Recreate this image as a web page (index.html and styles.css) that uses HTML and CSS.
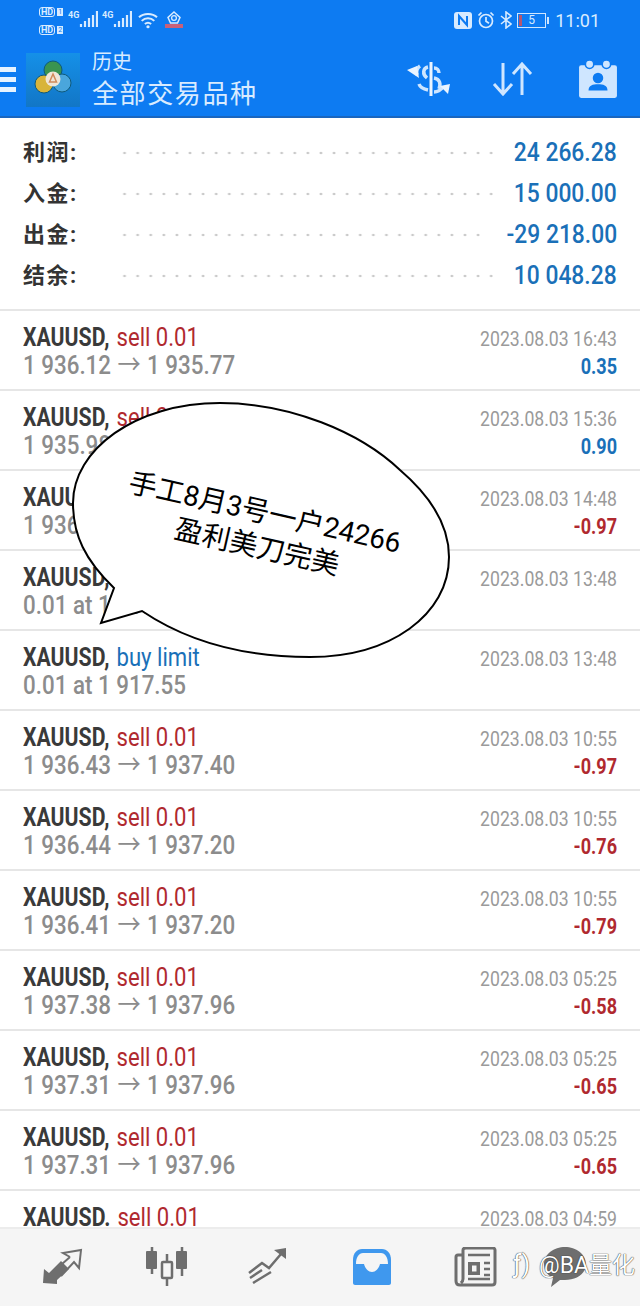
FILE: index.html
```html
<!DOCTYPE html>
<html lang="zh-CN">
<head>
    <meta charset="UTF-8">
    <meta name="viewport" content="width=device-width, initial-scale=1.0">
    <title>历史</title>
    <link rel="stylesheet" href="styles.css">
</head>
<body>
<div class="app">
    <div class="header">
        <div class="status">
            <div class="status-left">
                <div class="hd-col">
                    <div class="hd"><span class="hd-box">HD</span><span class="hd-num">1</span></div>
                    <div class="hd"><span class="hd-box">HD</span><span class="hd-num">2</span></div>
                </div>
                <svg class="signal" width="30" height="24" viewBox="0 0 30 24">
                    <text x="0" y="9" class="sig-text">4G</text>
                    <path d="M13 18v-3M17 18v-6M21 18v-9M25 18v-12M29 18v-16" stroke="#d8ebff" stroke-width="2.200" fill="none"/>
                </svg>
                <svg class="signal" width="30" height="24" viewBox="0 0 30 24">
                    <text x="0" y="9" class="sig-text">4G</text>
                    <path d="M13 18v-3M17 18v-6M21 18v-9M25 18v-12M29 18v-16" stroke="#d8ebff" stroke-width="2.200" fill="none"/>
                </svg>
                <svg class="wifi" width="20" height="18" viewBox="0 0 22 20">
                    <path d="M1 7C6 2 16 2 21 7M4 11C8 7 14 7 18 11M7.500 14.500C9.500 12.800 12.500 12.800 14.500 14.500" stroke="#d8ebff" stroke-width="2.200" fill="none"/>
                    <circle cx="11" cy="17.500" r="1.800" fill="#d8ebff"/>
                </svg>
                <svg class="vpn" width="20" height="20" viewBox="0 0 20 20">
                    <path d="M10 1L16 6.500L13.500 12H6.500L4 6.500Z" stroke="#d8ebff" stroke-width="1.500" fill="none"/>
                    <circle cx="10" cy="7" r="2.400" stroke="#d8ebff" stroke-width="1.300" fill="none"/>
                    <rect x="1" y="13" width="18" height="4" fill="#c8607a"/>
                </svg>
            </div>
            <div class="status-right">
                <svg width="18" height="17" viewBox="0 0 18 17">
                    <rect x="0" y="0" width="18" height="17" rx="3" fill="#d8ebff"/>
                    <path d="M5 13V4L13 13V4" stroke="#0d7bf2" stroke-width="2" fill="none"/>
                </svg>
                <svg width="18" height="18" viewBox="0 0 18 18">
                    <circle cx="9" cy="10" r="6.500" stroke="#d8ebff" stroke-width="1.700" fill="none"/>
                    <path d="M9 6v4.300l3 2M1.500 4.500L4.500 1.500M16.500 4.500L13.500 1.500" stroke="#d8ebff" stroke-width="1.700" fill="none"/>
                </svg>
                <svg width="12" height="18" viewBox="0 0 12 18">
                    <path d="M1 5L11 13L6 17V1L11 5L1 13" stroke="#d8ebff" stroke-width="1.600" fill="none"/>
                </svg>
                <div class="battery"><span class="battery-level"></span>5</div>
                <span class="battery-tip"></span>
                <span class="clock">11:01</span>
            </div>
        </div>
        <div class="appbar">
            <div class="burger"><span></span><span></span><span></span></div>
            <svg class="logo" width="54" height="54" viewBox="0 0 54 54">
                <defs>
                    <linearGradient id="logoBg" x1="0" y1="0" x2="0" y2="1">
                        <stop offset="0" stop-color="#1590e8"/>
                        <stop offset="1" stop-color="#1276c6"/>
                    </linearGradient>
                </defs>
                <rect width="54" height="54" fill="url(#logoBg)"/>
                <circle cx="27" cy="17" r="9" fill="#3a9450" stroke="#0f5a7a" stroke-width="1"/>
                <circle cx="18" cy="31" r="9" fill="#d8b43a" stroke="#0f5a7a" stroke-width="1"/>
                <circle cx="36" cy="30" r="9" fill="#4aa6dc" stroke="#0f5a7a" stroke-width="1"/>
                <circle cx="27" cy="26" r="7.500" fill="#efe6d8"/>
                <path d="M27 21L30.500 29H23.500Z" fill="none" stroke="#d08a5a" stroke-width="1.500"/>
            </svg>
            <div class="titles">
                <div class="title-small">历史</div>
                <div class="title-big">全部交易品种</div>
            </div>
            <div class="actions">
                <svg width="44" height="40" viewBox="0 0 44 40">
                    <path d="M24 3V37" stroke="#eaf4ff" stroke-width="3" fill="none"/>
                    <g fill="none" stroke="#cfe6ff" stroke-width="3.500">
                        <path d="M21 8C16 9 15 15 20 19"/>
                        <path d="M13 7C10 9 9 12 10 16"/>
                        <path d="M12 25C13 28 16 30 21 31"/>
                        <path d="M27 9C30 9 32 11 32 14"/>
                        <path d="M27 19C33 20 34 25 32 30"/>
                        <path d="M27 33C30 33 33 32 36 28"/>
                    </g>
                    <path d="M0 11L10 7L12 19ZM33 27L43 25L41 35Z" fill="#eaf4ff"/>
                </svg>
                <svg width="42" height="36" viewBox="0 0 42 36">
                    <path d="M11 2V33M2 23L11 33L20 23M30 34V3M21 13L30 3L39 13" stroke="#cfe6ff" stroke-width="3" fill="none"/>
                </svg>
                <svg class="calendar" width="40" height="40" viewBox="0 0 38 38">
                    <rect x="1" y="6" width="36" height="31" rx="2" fill="#cfe6ff"/>
                    <circle cx="11" cy="5" r="4" fill="#cfe6ff" stroke="#0d7bf2" stroke-width="1.500"/>
                    <circle cx="27" cy="5" r="4" fill="#cfe6ff" stroke="#0d7bf2" stroke-width="1.500"/>
                    <circle cx="19" cy="18" r="5" fill="#0d7bf2"/>
                    <path d="M10 30C10 25 14 24 19 24S28 25 28 30Z" fill="#0d7bf2"/>
                </svg>
            </div>
        </div>
    </div>

    <div class="summary">
        <div class="sum-row"><span class="sum-label">利润:</span><span class="dots"></span><span class="sum-value">24 266.28</span></div>
        <div class="sum-row"><span class="sum-label">入金:</span><span class="dots"></span><span class="sum-value">15 000.00</span></div>
        <div class="sum-row"><span class="sum-label">出金:</span><span class="dots dots-short"></span><span class="sum-value">-29 218.00</span></div>
        <div class="sum-row"><span class="sum-label">结余:</span><span class="dots"></span><span class="sum-value">10 048.28</span></div>
    </div>

    <div class="list">
        <div class="row">
            <div class="line-left title">XAUUSD, <span class="sell">sell 0.01</span></div><div class="line-right date">2023.08.03 16:43</div>
            <div class="line-left price">1 936.12 <span class="arrow">→</span> 1 935.77</div><div class="line-right pos">0.35</div>
        </div>
        <div class="row">
            <div class="line-left title">XAUUSD, <span class="sell">sell 0.01</span></div><div class="line-right date">2023.08.03 15:36</div>
            <div class="line-left price">1 935.98 <span class="arrow">→</span> 1 935.08</div><div class="line-right pos">0.90</div>
        </div>
        <div class="row">
            <div class="line-left title">XAUUSD, <span class="sell">sell 0.01</span></div><div class="line-right date">2023.08.03 14:48</div>
            <div class="line-left price">1 936.40 <span class="arrow">→</span> 1 937.37</div><div class="line-right neg">-0.97</div>
        </div>
        <div class="row">
            <div class="line-left title">XAUUSD, <span class="buy">buy limit</span></div><div class="line-right date">2023.08.03 13:48</div>
            <div class="line-left price">0.01 at 1 917.55</div><div class="line-right"></div>
        </div>
        <div class="row">
            <div class="line-left title">XAUUSD, <span class="buy">buy limit</span></div><div class="line-right date">2023.08.03 13:48</div>
            <div class="line-left price">0.01 at 1 917.55</div><div class="line-right"></div>
        </div>
        <div class="row">
            <div class="line-left title">XAUUSD, <span class="sell">sell 0.01</span></div><div class="line-right date">2023.08.03 10:55</div>
            <div class="line-left price">1 936.43 <span class="arrow">→</span> 1 937.40</div><div class="line-right neg">-0.97</div>
        </div>
        <div class="row">
            <div class="line-left title">XAUUSD, <span class="sell">sell 0.01</span></div><div class="line-right date">2023.08.03 10:55</div>
            <div class="line-left price">1 936.44 <span class="arrow">→</span> 1 937.20</div><div class="line-right neg">-0.76</div>
        </div>
        <div class="row">
            <div class="line-left title">XAUUSD, <span class="sell">sell 0.01</span></div><div class="line-right date">2023.08.03 10:55</div>
            <div class="line-left price">1 936.41 <span class="arrow">→</span> 1 937.20</div><div class="line-right neg">-0.79</div>
        </div>
        <div class="row">
            <div class="line-left title">XAUUSD, <span class="sell">sell 0.01</span></div><div class="line-right date">2023.08.03 05:25</div>
            <div class="line-left price">1 937.38 <span class="arrow">→</span> 1 937.96</div><div class="line-right neg">-0.58</div>
        </div>
        <div class="row">
            <div class="line-left title">XAUUSD, <span class="sell">sell 0.01</span></div><div class="line-right date">2023.08.03 05:25</div>
            <div class="line-left price">1 937.31 <span class="arrow">→</span> 1 937.96</div><div class="line-right neg">-0.65</div>
        </div>
        <div class="row">
            <div class="line-left title">XAUUSD, <span class="sell">sell 0.01</span></div><div class="line-right date">2023.08.03 05:25</div>
            <div class="line-left price">1 937.31 <span class="arrow">→</span> 1 937.96</div><div class="line-right neg">-0.65</div>
        </div>
        <div class="row">
            <div class="line-left title">XAUUSD. <span class="sell">sell 0.01</span></div><div class="line-right date">2023.08.03 04:59</div>
        </div>
    </div>

    <div class="tabbar">
        <svg width="44" height="42" viewBox="0 0 44 42">
            <path d="M1 36L2 22L7 26L19 14L27 22L15 33L15 37Z" fill="#6e6e6e"/>
            <path d="M28 10L21 6L39 3L37 21L32 15L19 29M28 10L20 17" stroke="#6e6e6e" stroke-width="2" fill="none"/>
        </svg>
        <svg width="44" height="42" viewBox="0 0 44 42">
            <path d="M7 0V27M37 0V29M22 7V39" stroke="#6e6e6e" stroke-width="2.500" fill="none"/>
            <rect x="1" y="4" width="11" height="18" rx="1" fill="#6e6e6e"/>
            <rect x="31" y="4" width="11" height="18" rx="1" fill="#6e6e6e"/>
            <rect x="17" y="15" width="10" height="16" rx="1" fill="#f5f5f5" stroke="#6e6e6e" stroke-width="2.500"/>
        </svg>
        <svg width="44" height="42" viewBox="0 0 44 42">
            <path d="M1 26L14 16L21 21L33 7" stroke="#6e6e6e" stroke-width="2.500" fill="none"/>
            <path d="M26 3L38 1L38 12Z" fill="#6e6e6e"/>
            <path d="M5 36L23 25M2 31L14 23" stroke="#6e6e6e" stroke-width="2.500" fill="none"/>
        </svg>
        <svg width="44" height="42" viewBox="0 0 44 42">
            <path d="M2 13C2 6 6 2 11 2H31C36 2 40 6 40 13V36C40 37 39 38 38 38H4C3 38 2 37 2 36Z" fill="#3f98ee"/>
            <path d="M5 17C5 10 8 6 12 6H30C34 6 37 10 37 17H29C28 21 25 25 21 25S14 21 13 17Z" fill="#f5f5f5"/>
        </svg>
        <svg width="44" height="42" viewBox="0 0 44 42">
            <path d="M9 8H4C2.500 8 2 9 2 10V34C2 37 4 38 6 38H38C40 38 41 37 41 35V3C41 2 40 1 39 1H12C10 1 9 2 9 3V32C9 34 8 35 7 36" stroke="#6e6e6e" stroke-width="3" fill="none"/>
            <path d="M14 8H36M30 16H36M30 22H36M30 28H36M14 32H36" stroke="#6e6e6e" stroke-width="2.500" fill="none"/>
            <path d="M14 15H26V28H14ZM18 18.500V24.500H22.500V18.500Z" fill="#6e6e6e" fill-rule="evenodd"/>
        </svg>
        <svg class="chat" width="44" height="42" viewBox="0 0 44 42">
            <path d="M22 0C33 0 43 7 43 17S33 33 22 33H17L8 40L10 31C4 28 1 23 1 17C1 7 11 0 22 0Z" fill="#6e6e6e"/>
        </svg>
    </div>
    <div class="watermark"><span class="wm-mark">ƒ)</span> @BA量化</div>

    <div class="bubble">
        <svg width="640" height="1306" viewBox="0 0 640 1306">
            <path d="M114 588C85 560 73 535 73 503C73 450 135 403 220 403C290 403 360 432 400 470C435 500 449 530 449 557C449 615 390 657 310 657C240 657 185 640 142 611L101 623Z" fill="#fff" stroke="#000" stroke-width="2"/>
        </svg>
        <div class="bubble-text">
            <div>手工8月3号一户24266</div>
            <div>盈利美刀完美</div>
        </div>
    </div>
</div>
</body>
</html>
```

FILE: styles.css
```css
html, body {
    margin: 0;
    padding: 0;
    background: #fff;
}
body {
    font-family: Roboto, "Noto Sans CJK SC", "DejaVu Sans", sans-serif;
}
.app {
    position: relative;
    width: 640px;
    height: 1306px;
    overflow: hidden;
    background: #fff;
}

/* blue top area */
.header {
    height: 118px;
    box-sizing: border-box;
    background: #0d7bf2;
    border-bottom: 2px solid #1a66bf;
    color: #d8ebff;
}
.status {
    height: 42px;
    display: flex;
    justify-content: space-between;
    align-items: center;
    padding: 0 40px 0 39px;
}
.status-left, .status-right {
    display: flex;
    align-items: center;
    gap: 4px;
}
.status-right {
    gap: 5px;
    margin-top: -2px;
}
.hd-col {
    display: flex;
    flex-direction: column;
    gap: 8px;
    width: 25px;
    margin-top: -1px;
}
.hd {
    display: flex;
    gap: 2px;
    align-items: center;
}
.hd-box {
    font-size: 9px;
    font-weight: 700;
    line-height: 8px;
    padding: 0 1px;
    border: 1px solid #d8ebff;
    border-radius: 3px;
}
.hd-num {
    font-size: 7px;
    line-height: 8px;
    background: #d8ebff;
    color: #0d7bf2;
    padding: 0 1px;
}
.sig-text {
    font-size: 9px;
    font-weight: 700;
    fill: #d8ebff;
}
.wifi {
    margin-left: 2px;
    margin-top: -3px;
}
.vpn {
    margin-left: 2px;
}
.battery {
    position: relative;
    box-sizing: border-box;
    width: 29px;
    height: 15px;
    border: 1px solid #cfe6ff;
    font-size: 12px;
    line-height: 13px;
    text-align: center;
}
.battery-level {
    position: absolute;
    left: 1px;
    top: 1px;
    bottom: 1px;
    width: 3px;
    background: #b5566f;
}
.battery-tip {
    width: 2px;
    height: 7px;
    margin-left: -4px;
    background: #cfe6ff;
}
.clock {
    font-size: 18px;
    margin-left: 1px;
}
.appbar {
    display: flex;
    align-items: center;
    height: 74px;
}
.burger {
    width: 16px;
    margin-right: 10px;
    display: flex;
    flex-direction: column;
    gap: 5px;
}
.burger span {
    height: 5px;
    background: #e6f2ff;
}
.logo {
    flex: none;
    margin-top: 2px;
}
.titles {
    margin-left: 12px;
    padding-top: 2px;
}
.title-small {
    font-size: 20px;
    line-height: 28px;
    color: #d8ebff;
}
.title-big {
    font-size: 26px;
    line-height: 36px;
    letter-spacing: 1.600px;
    color: #d8ebff;
}
.actions {
    margin-left: auto;
    display: flex;
    align-items: center;
    padding-right: 22px;
}
.actions svg:nth-child(2) {
    margin: 0 44px 0 41px;
}

/* totals */
.summary {
    height: 193px;
    box-sizing: border-box;
    padding: 14px 23px 0;
    border-bottom: 2px solid #e6e6e6;
}
.sum-row {
    display: flex;
    align-items: center;
    height: 41px;
}
.sum-label {
    width: 95px;
    margin-bottom: 5px;
    font-size: 22px;
    letter-spacing: 1.500px;
    font-weight: 700;
    color: #333;
}
.dots {
    flex: none;
    width: 376px;
    height: 4px;
    background: radial-gradient(circle, #cacaca 1.300px, transparent 1.600px) 0 0 / 13.100px 4px repeat-x;
}
.dots-short {
    width: 363px;
}
.sum-value {
    margin-left: auto;
    font-size: 25px;
    font-weight: 500;
    color: #1a70b8;
    white-space: nowrap;
    transform: scaleX(.913);
    transform-origin: right center;
}

/* deals */
.row {
    display: grid;
    grid-template-columns: 1fr auto;
    grid-template-rows: 28px 28px;
    box-sizing: border-box;
    height: 80px;
    padding: 12px 23px 0;
    border-bottom: 2px solid #e6e6e6;
    white-space: nowrap;
}
.line-left {
    transform: scaleX(.85);
    transform-origin: left center;
}
.line-right {
    margin-top: 2px;
    text-align: right;
    transform: scaleX(.84);
    transform-origin: right center;
}
.title {
    font-size: 25px;
    line-height: 28px;
    font-weight: 700;
    color: #3a3a3a;
}
.sell, .buy {
    margin-left: 2px;
    font-size: 26px;
    font-weight: 400;
}
.sell {
    color: #b0292f;
}
.buy {
    color: #1a70b8;
}
.price {
    font-size: 26px;
    line-height: 28px;
    font-weight: 500;
    color: #8c8c8c;
    transform: scaleX(.86);
}
.arrow {
    margin: 0 1px;
    font-weight: 400;
    font-size: 27px;
}
.date {
    font-size: 21px;
    line-height: 28px;
    color: #9a9a9a;
}
.pos, .neg {
    font-size: 21.500px;
    line-height: 28px;
    font-weight: 700;
}
.pos {
    color: #1a70b8;
}
.neg {
    color: #b0292f;
}

/* bottom nav */
.tabbar {
    position: absolute;
    left: 0;
    right: 0;
    bottom: 0;
    height: 79px;
    box-sizing: border-box;
    display: flex;
    align-items: center;
    gap: 59px;
    padding: 0 0 0 42px;
    background: #f5f5f5;
    border-top: 2px solid #ececec;
}
.chat {
    margin-left: -14px;
}
.watermark {
    position: absolute;
    right: 5px;
    bottom: 26px;
    font-size: 23px;
    color: #fff;
    white-space: nowrap;
    text-shadow: 0 0 1px #333, 0 0 1px #333;
}
.wm-mark {
    font-size: 25px;
    margin-right: 3px;
}

/* the speech bubble drawn over the screenshot */
.bubble {
    position: absolute;
    left: 0;
    top: 0;
    width: 640px;
    height: 1306px;
    pointer-events: none;
}
.bubble svg {
    display: block;
}
.bubble-text {
    position: absolute;
    left: 101px;
    top: 495px;
    width: 320px;
    text-align: center;
    font-size: 28px;
    line-height: 35px;
    color: #000;
    transform: rotate(12.800deg);
    white-space: nowrap;
}
```
